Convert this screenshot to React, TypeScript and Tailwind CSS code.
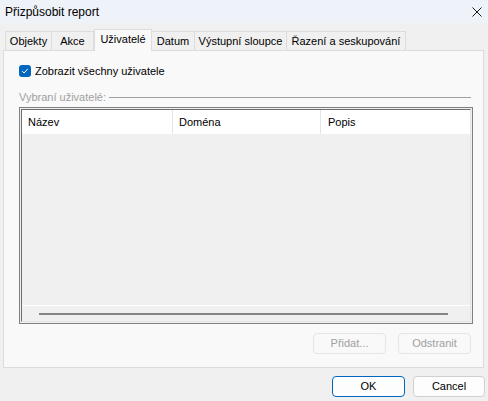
import React from 'react';

const tabs = ['Objekty', 'Akce', 'Uživatelé', 'Datum', 'Výstupní sloupce', 'Řazení a seskupování'];
const tabWidths = [47, 42, 58, 43, 92, 119];

function Tab({ label, width, active }: { label: string; width: number; active: boolean }) {
  return (
    <div
      style={{ width }}
      className={
        active
          ? 'relative z-10 h-[22px] -mb-px flex items-start justify-center pt-[4px] bg-[#f9f9f9] border border-b-0 border-[#dcdcdc]'
          : 'h-[19px] flex items-center justify-center bg-[#f0f0f0] border-t border-r border-[#dcdcdc] first:border-l'
      }
    >
      <span className="text-[11px] text-black leading-none">{label}</span>
    </div>
  );
}

function Btn({ label, disabled, primary, width }: { label: string; disabled?: boolean; primary?: boolean; width: number }) {
  return (
    <div
      style={{ width }}
      className={`h-[21px] rounded-[4px] flex items-center justify-center text-[11px] border ${
        disabled
          ? 'bg-[#f9f9f9] border-[#e5e5e5] text-[#a0a0a0]'
          : primary
          ? 'bg-[#fdfdfd] border-[#0067c0] text-black'
          : 'bg-[#fdfdfd] border-[#d0d0d0] text-black'
      }`}
    >
      {label}
    </div>
  );
}

export default function App() {
  return (
    <div className="w-[488px] h-[401px] bg-[#f0f0f0] flex flex-col overflow-hidden" style={{ fontFamily: '"Liberation Sans", Arial, sans-serif' }}>
      {/* Title bar */}
      <div className="h-[23px] bg-[#eef3f9] flex items-center justify-between pl-[5px] pr-[5px] shrink-0">
        <span className="text-[12px] text-black leading-none">Přizpůsobit report</span>
        <svg width="10" height="10" viewBox="0 0 10 10" className="mr-[1px]">
          <path d="M0.5 0.5 L9.5 9.5 M9.5 0.5 L0.5 9.5" stroke="#1a1a1a" strokeWidth="1" />
        </svg>
      </div>

      {/* Tabs */}
      <div className="px-[3px] pt-[6px]">
        <div className="flex items-end pl-[2px] h-[21px]">
          {tabs.map((t, i) => (
            <Tab key={t} label={t} width={tabWidths[i]} active={i === 2} />
          ))}
        </div>
      </div>

      {/* Tab panel */}
      <div className="ml-[3px] mr-[4px] h-[318px] bg-[#f9f9f9] border border-[#dcdcdc] flex flex-col pl-[15px] pr-[10px]">
        <div className="flex items-center mt-[14px] h-[12px]">
          <div className="w-[12px] h-[12px] rounded-[3px] bg-[#0067c0] flex items-center justify-center">
            <svg width="8" height="8" viewBox="0 0 8 8">
              <path d="M1.2 4.2 L3.1 6 L6.8 1.8" stroke="#fff" strokeWidth="1" fill="none" />
            </svg>
          </div>
          <span className="ml-[4px] text-[11px] text-black leading-none">Zobrazit všechny uživatele</span>
        </div>

        <div className="flex items-center mt-[14px] h-[12px]">
          <span className="text-[11px] text-[#a0a0a0] leading-none">Vybraní uživatelé:</span>
          <div className="flex-1 h-px bg-[#a0a0a0] ml-[3px] mr-[2px]" />
        </div>

        {/* List box */}
        <div className="mt-[4px] h-[217px] border border-[#808080] p-px bg-[#f0f0f0]">
          <div className="h-full flex flex-col border-t border-l border-[#6e6e6e] border-r border-b border-r-[#e3e3e3] border-b-[#e3e3e3]">
            <div className="h-[24px] bg-white flex text-[11px] text-black shrink-0">
              <div className="w-[151px] border-r border-[#e5e5e5] flex items-center pl-[6px]">Název</div>
              <div className="w-[148px] border-r border-[#e5e5e5] flex items-center pl-[6px]">Doména</div>
              <div className="flex-1 flex items-center pl-[7px]">Popis</div>
            </div>
            <div className="flex-1 bg-[#f0f0f0]" />
            <div className="h-[16px] border-t border-white bg-[#f0f0f0] flex items-center pl-[17px] pr-[22px]">
              <div className="flex-1 h-[2px] bg-[#858585]" />
            </div>
          </div>
        </div>

        <div className="flex justify-end gap-[12px] mt-[9px] mr-[2px]">
          <Btn label="Přidat..." disabled width={73} />
          <Btn label="Odstranit" disabled width={73} />
        </div>
      </div>

      {/* Dialog buttons */}
      <div className="flex justify-end gap-[8px] mt-[8px] pr-[3px]">
        <Btn label="OK" primary width={73} />
        <Btn label="Cancel" width={72} />
      </div>
    </div>
  );
}
